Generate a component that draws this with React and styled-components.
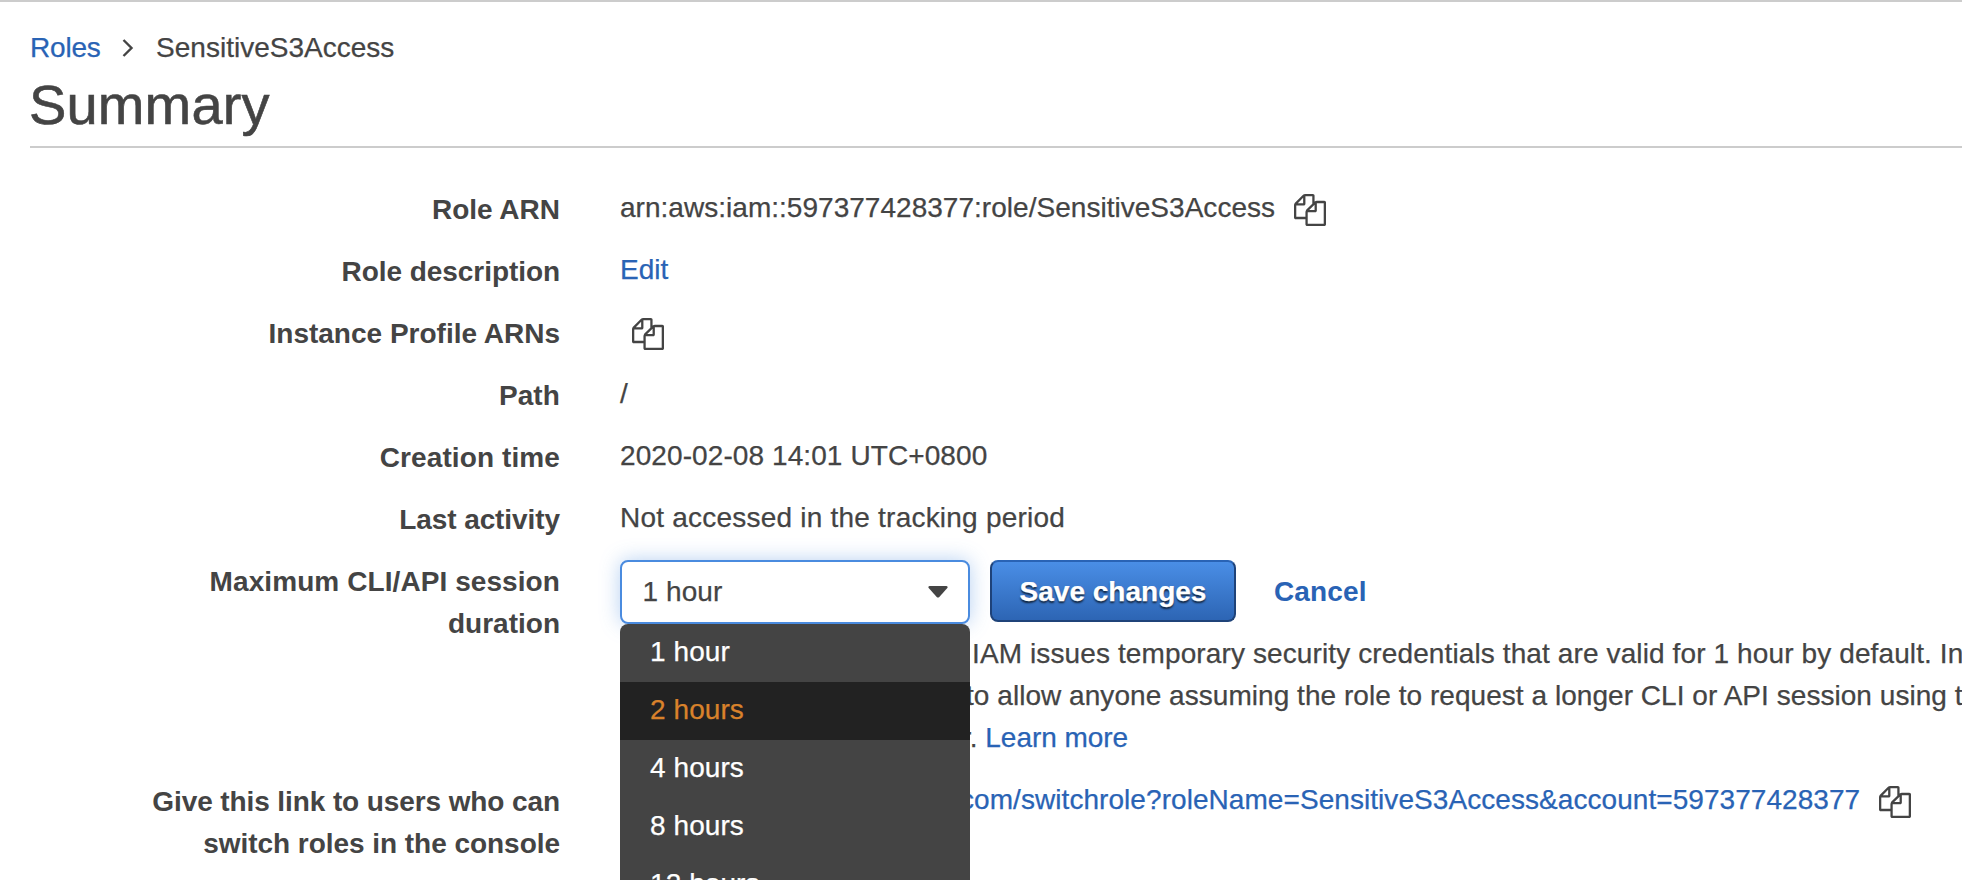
import React from "react";
import styled, { createGlobalStyle, css } from "styled-components";

const GlobalStyle = createGlobalStyle`
  * { box-sizing: border-box; }
  html, body { margin: 0; height: 100%; overflow: hidden; background: #fff; }
`;

const Page = styled.main`
  height: 880px;
  overflow: hidden;
  padding: 25px 0 0 30px;
  border-top: 2px solid #ccc;
  background: #fff;
  color: #444;
  font: 28px/42px "Helvetica Neue", "Liberation Sans", Arial, sans-serif;
  -webkit-text-stroke: 0.25px;
`;

const Run = styled.span`
  white-space: pre;
  letter-spacing: ${(p) => p.$track || 0}px;
`;

const linkStyle = css`
  color: #2963b5;
  text-decoration: none;
`;

const Link = styled.a`
  ${linkStyle}
  white-space: pre;
  letter-spacing: ${(p) => p.$track || 0}px;
`;

const Breadcrumb = styled.nav`
  display: flex;
  align-items: center;
  height: 42px;
`;

const Chevron = styled.svg`
  width: 12px;
  height: 20px;
  margin: 0 22.5px 0 21px;
`;

const Title = styled.h1`
  margin: 0;
  height: 79px;
  border-bottom: 2px solid #ccc;
  font-size: 56px;
  line-height: 72px;
  font-weight: 400;
  text-indent: -1px;
  letter-spacing: 0.15px;
  -webkit-text-stroke: 0.6px;
`;

const Details = styled.dl`
  display: flex;
  flex-direction: column;
  gap: 20px;
  margin: 39px 0 0;
`;

const Row = styled.div`
  display: grid;
  grid-template-columns: 530px 1400px;
  column-gap: 60px;
  align-items: start;
  min-height: 42px;
`;

const Label = styled.dt`
  display: flex;
  flex-direction: column;
  align-items: flex-end;
  padding-top: 2px;
  margin-bottom: -2px;
  font-weight: 700;
  -webkit-text-stroke: 0;
`;

const Value = styled.dd`
  margin: 0;
  display: flex;
  align-items: center;
  min-height: 42px;
`;

const CopySvg = styled.svg`
  width: 32px;
  height: 32px;
  flex: none;
  margin-left: ${(p) => p.$gap}px;
  margin-top: 4px;
  fill: #444;
`;

const Stack = styled.dd`
  margin: 0;
  padding-top: 1px;
`;

const Controls = styled.div`
  display: flex;
  align-items: flex-start;
  height: 73px;
`;

const SelectWrap = styled.div`
  position: relative;
  width: 350px;
  margin-right: 20px;
`;

const SelectBox = styled.div`
  display: flex;
  align-items: center;
  justify-content: space-between;
  height: 64px;
  padding: 0 20px 0 20.5px;
  border: 2px solid #4a8bdf;
  border-radius: 8px;
  background: #fff;
  box-shadow: 0 0 20px rgba(74, 139, 223, 0.4);
`;

const Caret = styled.svg`
  width: 20px;
  height: 12px;
  fill: #444;
`;

const Menu = styled.ul`
  position: absolute;
  z-index: 2;
  top: 64px;
  left: 0;
  width: 350px;
  margin: 0;
  padding: 0;
  list-style: none;
  border-radius: 8px;
  background: #444;
  overflow: hidden;
`;

const Option = styled.li`
  height: 58px;
  padding-left: 30px;
  line-height: 56px;
  color: ${(p) => (p.$active ? "#d9822b" : "#fff")};
  background: ${(p) => (p.$active ? "#222" : "transparent")};
`;

const Button = styled.button`
  width: 246px;
  height: 62px;
  padding: 2px 0 0;
  border: 2px solid #1f4379;
  border-top-color: #2963b5;
  border-radius: 8px;
  background: linear-gradient(#4a8ee6, #2d65b4);
  color: #fff;
  font: inherit;
  font-weight: 700;
  text-shadow: 0 2px 2px rgba(0, 0, 0, 0.7);
`;

const Cancel = styled.a`
  ${linkStyle}
  margin-left: 38px;
  line-height: 64px;
  font-weight: 700;
  -webkit-text-stroke: 0;
`;

const Help = styled.div`
  height: 126px;
`;

const HelpLine = styled.div`
  height: 42px;
  padding-left: ${(p) => p.$inset}px;
  white-space: pre;
`;

const LinkValue = styled(Value)`
  padding-left: 340px;
`;

const CopyIcon = ({ gap }) => (
  <CopySvg $gap={gap} viewBox="0 0 1792 1792" aria-label="Copy">
    <path d="M1696 384q40 0 68 28t28 68v1216q0 40-28 68t-68 28h-960q-40 0-68-28t-28-68v-288h-544q-40 0-68-28t-28-68v-672q0-40 20-88t48-76l408-408q28-28 76-48t88-20h416q40 0 68 28t28 68v328q68-40 128-40h416zm-544 213l-299 299h299v-299zm-640-384l-299 299h299v-299zm196 647l316-316v-416h-384v416q0 40-28 68t-68 28h-416v640h512v-256q0-40 20-88t48-76zm956 804v-1152h-384v416q0 40-28 68t-68 28h-416v640h896z" />
  </CopySvg>
);

const options = ["1 hour", "2 hours", "4 hours", "8 hours", "12 hours"];

export default function App() {
  return (
    <>
      <GlobalStyle />
      <Page>
        <Breadcrumb>
          <Link href="#roles" $track={-0.2}>Roles</Link>
          <Chevron viewBox="0 0 12 20" fill="none" stroke="#444" strokeWidth="2.4">
            <path d="M1.5 2 L9.5 10 L1.5 18" />
          </Chevron>
          <Run>SensitiveS3Access</Run>
        </Breadcrumb>
        <Title>Summary</Title>
        <Details>
          <Row>
            <Label><Run>Role ARN</Run></Label>
            <Value>
              <Run $track={0.028}>arn:aws:iam::597377428377:role/SensitiveS3Access</Run>
              <CopyIcon gap={19} />
            </Value>
          </Row>
          <Row>
            <Label><Run $track={-0.06}>Role description</Run></Label>
            <Value><Link href="#edit">Edit</Link></Value>
          </Row>
          <Row>
            <Label><Run>Instance Profile ARNs</Run></Label>
            <Value><CopyIcon gap={12} /></Value>
          </Row>
          <Row>
            <Label><Run $track={0.1}>Path</Run></Label>
            <Value><Run>/</Run></Value>
          </Row>
          <Row>
            <Label><Run $track={0.1}>Creation time</Run></Label>
            <Value><Run $track={0.09}>2020-02-08 14:01 UTC+0800</Run></Value>
          </Row>
          <Row>
            <Label><Run $track={-0.08}>Last activity</Run></Label>
            <Value><Run $track={0.22}>Not accessed in the tracking period</Run></Value>
          </Row>
          <Row>
            <Label>
              <Run $track={0.08}>Maximum CLI/API session</Run>
              <Run>duration</Run>
            </Label>
            <Stack>
              <Controls>
                <SelectWrap>
                  <SelectBox>
                    <Run $track={0.08}>1 hour</Run>
                    <Caret viewBox="0 0 20 12">
                      <path d="M1.5 0h17q1.8.4.8 2l-8 9q-1.3 1.2-2.6 0l-8-9q-1-1.6.8-2z" />
                    </Caret>
                  </SelectBox>
                  <Menu>
                    {options.map((o) => (
                      <Option key={o} $active={o === "2 hours"}><Run $track={0.08}>{o}</Run></Option>
                    ))}
                  </Menu>
                </SelectWrap>
                <Button><Run>Save changes</Run></Button>
                <Cancel href="#cancel"><Run $track={0.15}>Cancel</Run></Cancel>
              </Controls>
              <Help>
                <HelpLine $inset={352}><Run $track={0.115}>IAM issues temporary security credentials that are valid for 1 hour by default. In</Run></HelpLine>
                <HelpLine $inset={346}><Run $track={0.045}>to allow anyone assuming the role to request a longer CLI or API session using t</Run></HelpLine>
                <HelpLine $inset={342}><Run>r. </Run><Link href="#learn" $track={-0.05}>Learn more</Link></HelpLine>
              </Help>
            </Stack>
          </Row>
          <Row>
            <Label>
              <Run $track={-0.1}>Give this link to users who can</Run>
              <Run $track={-0.04}>switch roles in the console</Run>
            </Label>
            <LinkValue>
              <Link href="#switchrole" $track={0.06}>com/switchrole?roleName=SensitiveS3Access&amp;account=597377428377</Link>
              <CopyIcon gap={19} />
            </LinkValue>
          </Row>
        </Details>
      </Page>
    </>
  );
}
